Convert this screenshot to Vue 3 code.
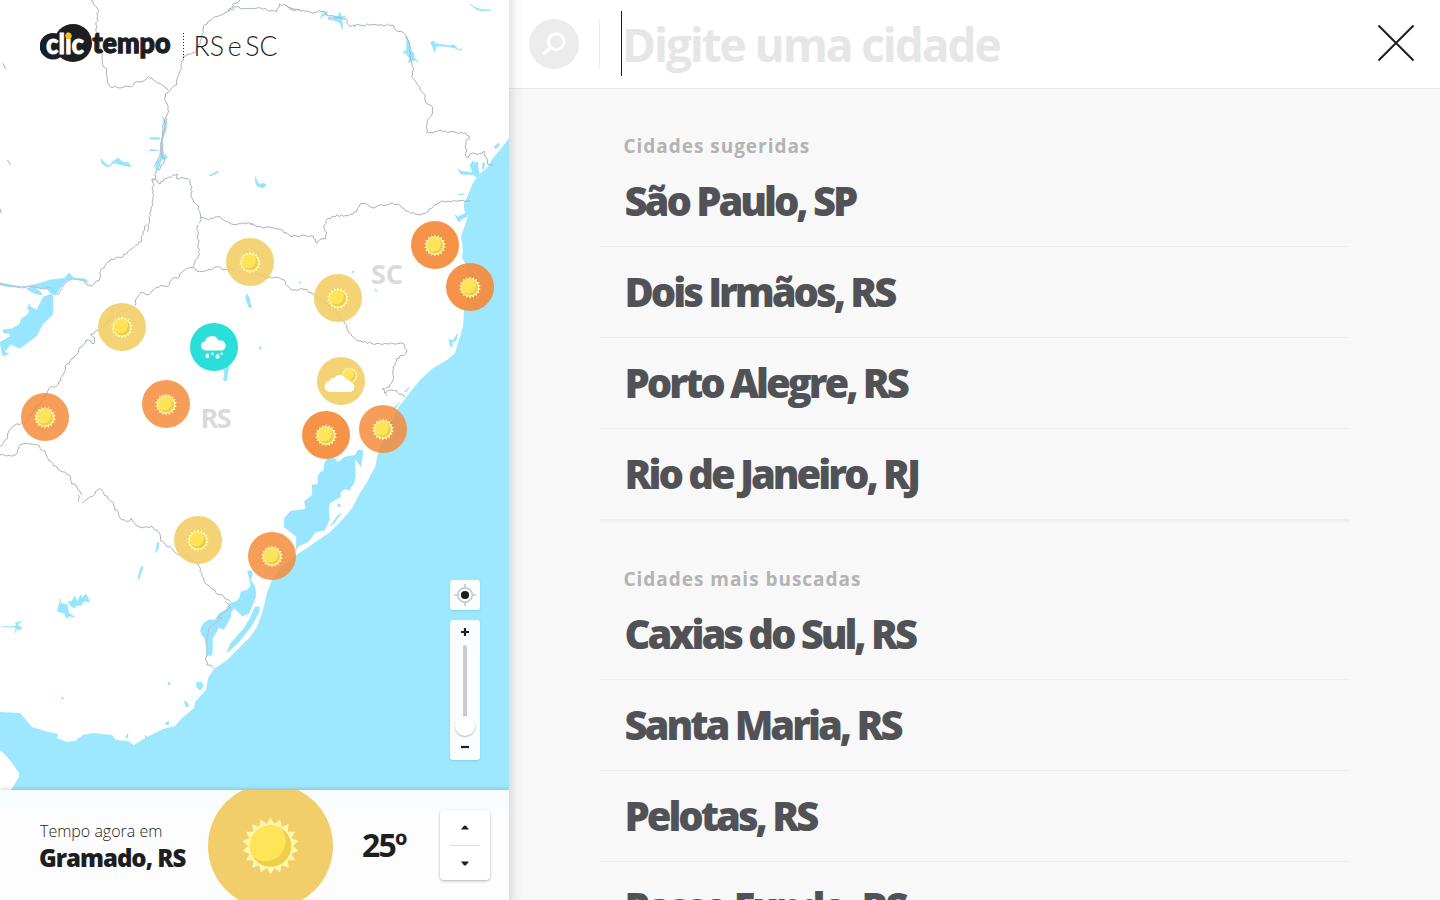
<script setup>
const SUN_SPIKES = 18

function spikes(outer, inner) {
  const points = []
  for (let i = 0; i < SUN_SPIKES * 2; i++) {
    const radius = i % 2 ? inner : outer
    const angle = (Math.PI * i) / SUN_SPIKES - Math.PI / 2
    points.push(`${(radius * Math.cos(angle)).toFixed(2)},${(radius * Math.sin(angle)).toFixed(2)}`)
  }
  return points.join(' ')
}

const sunRays = spikes(28.3, 22.3)

// Border lines: origin in map pixels; start and steps in thirds of a pixel.
const borderLines = [
  { x: 0, y: 0, start: [273, 0], steps: '7 12 12 13 2 23 -6 27 5 25 7 40 6 32 2 23 12 15 2 30 10 22 13 -4 12 6 18 -6 20 2 15 -15 25 -5 10 -10 15 10 20 10 25 22' },
  { x: 0, y: 0, start: [720, 0], steps: '-20 10 -15 25 -20 10 -30 12 -25 20 -6 40 -10 20 -8 20 -36 12 -12 50 -8 36 -20 17 -14 13 -2 14 12 36 -12 28 -5 22 -4 70 8 28 -25 35 -10 30 3 38 -10 60 -8 50' },
  { x: 0, y: 0, start: [453, 540], steps: '15 -2 12 14 12 -16 20 -4 8 -8 12 -2 -2 14 16 -4 10 4 14 6 6 20 -2 18 6 20 16 20 6 30 -6 20' },
  { x: 0, y: 0, start: [602, 652], steps: '24 8 20 -10 14 0 16 14 18 8 66 -2' },
  { x: 0, y: 0, start: [685, 34], steps: '25 -14 18 6 24 0 30 -2 20 6 28 4 8 -22 20 4 20 14 22 0' },
  { x: 0, y: 0, start: [8, 190], steps: '10 18' },
  { x: 0, y: 0, start: [22, 480], steps: '10 14' },
  { x: 0, y: 0, start: [0, 626], steps: '4 14' },
  { x: 260, y: 0, start: [80, 19], steps: '22 8 50 10 40 -3 16 14 26 4 22 4 14 24 16 -4 50 -2 60 1 12 14 26 14 10 16 6 20 2 40 8 24 -2 32 12 16 26 34 2 24 20 14 -4 24 -12 14 -2 36 20 2 24 -8 18 6 54 2 12 10 -10 24 -2 28 8 12 14 -14 20 2 14 -8 8 22 2 16 20 4' },
  { x: 250, y: 200, start: [0, 70], steps: '20 10 72 8 28 20 70 0 12 22 8 -12 18 -2 2 -20 -8 -14 6 -20 20 -14 40 -2 20 -2 20 -24 4 -10 20 4 20 10 20 -10 50 -2 20 14 20 14 28 5 16 -5 24 -20 20 -14 60 -4 30 0' },
  { x: 250, y: 200, start: [0, 210], steps: '52 24 30 -2 20 8 20 28 40 0 28 14 30 22 30 20 34 46 10 22 28 30 30 8 80 2 30 0 8 24 -30 20 -10 30 -2 34 -10 22 -22 4 16 20' },
  { x: 250, y: 200, start: [402, 578], steps: '16 -8 22 2 8 10 18 10' },
  { x: 0, y: 225, start: [595, 0], steps: '-4 14 4 40 4 32 -14 20 -6 22 20 12 34 -5 20 -10 12 8 40 2' },
  { x: 0, y: 225, start: [578, 128], steps: '-24 6 -22 26 -14 0 -14 24 -22 -2 -20 12 -18 16 -22 -8 -14 20 -4 20' },
  { x: 0, y: 225, start: [400, 245], steps: '-60 30 -48 41 -20 12 12 10 -2 18 -24 -10 -22 30 -14 22 -26 24 -6 26 -20 34 -24 10 -12 24 -60 80' },
  { x: 0, y: 225, start: [440, 0], steps: '-12 20 -4 30 -22 16 -14 10 -20 20 -36 6 -14 14 -16 20 -2 24 -24 24 -18 -8 -4 -8' },
  { x: 0, y: 225, start: [65, 594], steps: '-20 6 -18 18 -4 22 -23 24' },
  { x: 0, y: 225, start: [0, 690], steps: '20 3 28 -4 10 -24 10 -8 36 2' },
  { x: 0, y: 440, start: [105, 13], steps: '30 20 8 20 30 34 34 18 8 26 16 10 16 24' },
  { x: 0, y: 440, start: [236, 165], steps: '0 20' },
  { x: 0, y: 440, start: [246, 190], steps: '30 -20 22 -24 10 8 20 26 10 6 6 24 10 4 6 20 26 10 8 -10 6 12 20 16 40 0 20 20 0 18 55 45 20 0 32 24 10 10 8 30 14 24 18 14 14 16 20 6 20 16' },
  { x: 0, y: 440, start: [620, 640], steps: '0 34 14 2 8 10' },
]

// Splits every step into short pieces and nudges them sideways, so that
// the borders read as river courses rather than straight segments.
function meander({ x, y, start, steps }, seed) {
  let state = seed * 7919 + 13
  const noise = () => {
    state = (state * 16807) % 2147483647
    return state / 2147483647 - 0.5
  }
  const point = (px, py) => `${(x + px / 3).toFixed(1)} ${(y + py / 3).toFixed(1)}`
  const n = steps.split(' ').map(Number)
  let [cx, cy] = start
  let d = `M${point(cx, cy)}L`
  for (let i = 0; i < n.length; i += 2) {
    const dx = n[i]
    const dy = n[i + 1]
    const length = Math.hypot(dx, dy) || 1
    const parts = Math.max(1, Math.round(length / 7))
    for (let k = 1; k <= parts; k++) {
      const shift = k === parts ? 0 : noise() * 7
      d += `${point(cx + (dx * k) / parts - (dy / length) * shift, cy + (dy * k) / parts + (dx / length) * shift)} `
    }
    cx += dx
    cy += dy
  }
  return d
}

const borders = borderLines.map((line, i) => meander(line, i + 1))

const yellow = '#f2ce67'
const orange = '#f58a3a'

const markers = [
  { x: 435, y: 245, color: orange, opacity: 0.92, icon: 'sun' },
  { x: 470, y: 287, color: orange, opacity: 0.92, icon: 'sun' },
  { x: 250, y: 262, color: yellow, opacity: 0.9, icon: 'sun' },
  { x: 338, y: 298, color: yellow, opacity: 0.9, icon: 'sun' },
  { x: 122, y: 327, color: yellow, opacity: 0.9, icon: 'sun' },
  { x: 214, y: 347, color: '#2adfd9', opacity: 1, icon: 'rain' },
  { x: 341, y: 381, color: yellow, opacity: 0.9, icon: 'cloud' },
  { x: 45, y: 417, color: orange, opacity: 0.84, icon: 'sun' },
  { x: 166, y: 404, color: orange, opacity: 0.84, icon: 'sun' },
  { x: 326, y: 435, color: orange, opacity: 0.92, icon: 'sun' },
  { x: 383, y: 429, color: orange, opacity: 0.84, icon: 'sun' },
  { x: 198, y: 540, color: yellow, opacity: 0.9, icon: 'sun' },
  { x: 272, y: 556, color: orange, opacity: 0.84, icon: 'sun' },
]

const sections = [
  { title: 'Cidades sugeridas', cities: ['São Paulo, SP', 'Dois Irmãos, RS', 'Porto Alegre, RS', 'Rio de Janeiro, RJ'] },
  { title: 'Cidades mais buscadas', cities: ['Caxias do Sul, RS', 'Santa Maria, RS', 'Pelotas, RS', 'Passo Fundo, RS'] },
]
</script>

<template>
  <div class="app">
    <aside class="side">
      <div class="map">
        <svg class="map-art" width="509" height="790" viewBox="0 0 509 790">
          <defs>
            <clipPath id="disc"><circle r="20.8" /></clipPath>
            <g id="sun">
              <polygon :points="sunRays" fill="#fff8ac" />
              <circle r="20.8" fill="#edcf4c" />
              <circle cx="-5" cy="-5" r="20" fill="#ffe45a" clip-path="url(#disc)" />
            </g>
          </defs>

          <path class="sea" d="M509 138L500 150 493 158 487 168 478 175 473 183 467 197 464 203 464 210 466 213 468 215 465 225 461 237 463 250 462 258 465 263 468 290 464 310 463 327 459 340 455 353 447 360 433 368 420 380 412 390 405 399 398 408 388 427 378 453 375 467 367 482 360 493 352 508 342 520 330 532 320 539 307 548 296 555 281 567 272 580 267 593 263 610 257 627 250 637 237 650 227 660 214 669 208 678 206 690 195 702 194 708 182 718 175 726 163 729 147 737 134 745 128 741 116 740 112 735 93 733 83 735 75 741 67 742 57 738 58 734 45 731 32 727 20 713 0 712V750L10 760 19 773 19 777 11 790H509Z" />

          <!-- inland water -->
          <g class="water">
            <g transform="scale(.33333)">
              <path d="M488 350l8 12 5 5-3 25-8 20-4 25 6 25 10 8-5 8-8-2-8 12-6 22-8-4 2-18 10-12 4-20-2-22 6-22 6-30z M450 413l28 0v5l-28 0z M450 448l26 3-26 2z M303 476l12 14 12 8 14-16 14-8 12 12 18 2 8 12-20-3-20-6-12-2-14 12-10-2-12-10z M627 526l20-8-2-2 12-2-10 8-18 6z M766 530l6 16 8 8 10-4 8 3-10 10-16-4-5-12z" />
            </g>
            <g transform="translate(260 0) scale(.33333)">
              <path d="M628 11l14 10 24 8 28 1-24 3-20-4z M182 55l4-14 16-6-2 8-12 6z M205 52l30-4 5-12 4 14 14-2-12 8 2 34-8-22-20-8-16-2z M280 80l6-5-2 7z M440 108l8 22 4 20 10 10 0 14 14 12-14-6-16 8 2-14-10-14-10-2 12-8z M512 127l10-4 3 8 24 3 16 4 16-4 14 14 12-1-8 4-16-8-14-2-30-4-12 4-2 16z M594 506l10 8 34 4-4-14-4-6 8-16 8 8 8-4 0 18 4 16-10 12-8-8-38-2z M668 490l6-2-2 16-4 6z M702 440l12-10 5 2-6 10-6 4z M594 583l20-2-10 4z M4 552l14 2-8 10z M585 644l10 10 20-10 8 4-20 10-8 6z" />
            </g>
            <g transform="translate(0 225) scale(.33333)">
              <path d="M0 173l30 6 40 8 50-12 30-10 45-5 12-17 14 16 35 3 10 10-30-7-18-4-20 6-16 20-16 24-16-8-8-10-30-4-24-6-60 3-38-8z M80 192l20-8 22 18 4 8-20-4z M155 208l4 10-1 50-30 30-18 34-50 38-28-12-18 22 12 8-18 4-8-40 32-18-4-10-18 0 0-10 24-2 26-14 4-16 20-14 8-22 18 10 20-40z M88 236l4 14-10 4z M740 206l10 16 0 20 5 4-8 0-10-26z M672 434l6-8 4-8 4 12-4 20-2 18-10-3 4-16z" />
            </g>
            <g transform="translate(250 200) scale(.33333)">
              <path d="M597 418l12 4 14-22-4 20-14 10 2 12-6-4z M462 576l16-14-8 12z M422 636l26-30-12 20-8 4z M0 310l5 10-5 4z M28 440l5 0-2 10z M305 216l8-3-4 6z M148 248l6-4-4 8z M374 266l6 4-1 5z M616 44l6 8 20-10 6-4 6 4-20 10-6 14z" />
            </g>
            <g transform="translate(160 430) scale(.33333)">
              <path d="M505 84l25 4-4 8 14-2 12-12 34-6 8-16 14 2 0 10-6 38-12-20-6 4 2 44-4 20-14 22-14-4-14 12 2 12-34 20-2 18 2 30-14 32-28 6-20 28-34 16-4 10 2-40-38-30 2-26 18-20 46-6-4-24 24-20-2-28 18-4 0-24 12-16 4 10 4-34z M534 224l4-4 4 8-8 2z M545 250l-22 28-12 10 20-28z M263 424l12-2 2 12-6 16 14 20 2 30-20 50-20 8-24-24-10 12 0 12-12 24-10 16-16-6-4 10-14 24 0 40-4 12-12-4-4-36-4-16-6-4-6-16 8-20 16-12 20 0 14-20 20-12 8-18 20-4 12-12 4-18 20-6 10-14z M285 532l12-2 0 16-24 44-40 50-32 28 10-26 40-46 20-32z M108 758l14-2 8 10-8 14-10-6z M24 756l8 4-6 6z" />
            </g>
            <g transform="translate(0 440) scale(.33333)">
              <path d="M472 308l5 0-2 16-8 14z M426 378l3 4-12 36-3-2 6-26z M204 486l12-2 8-16 8 18 10-22 4 10 12-12 8 16 2 8-16-4-8 14-14 0-6 8-12-6z M182 476l-2 14 22 4 4 24 18 14-18-4-6 8-6-16-22-6z M6 560l32 0 12-4-4-8 20-4-14 10 14 10-8 6-8-4-4 12 2-16z M183 774l8-2-3 6z" />
            </g>
            <g transform="translate(0 640) scale(.33333)">
              <path d="M553 184l8 2 5 14-8 0z M494 250l13-6-2 12z M384 280l-2 14-6-3z M435 286l8 6-5 4z" />
            </g>
          </g>

          <!-- state and country borders -->
          <g class="borders">
            <path v-for="(d, i) in borders" :key="i" :d="d" />
          </g>
          <g class="water-borders">
            <path d="M167 118L164 132 161 143 160 155 154 167" />
            <path d="M0 284L22 288 32 286 42 289 50 287 58 295 65 283 72 279 83 280 88 285" />
            <path d="M225 601L231 607 218 617 222 618 209 628 207 640V652" />
          </g>

          <g class="labels">
            <text x="371" y="283.500" textLength="32">SC</text>
            <text x="200.500" y="428.200" textLength="31">RS</text>
          </g>

          <g v-for="m in markers" :key="`${m.x}-${m.y}`" :transform="`translate(${m.x} ${m.y})`">
            <circle r="24" :fill="m.color" :fill-opacity="m.opacity" />
            <use v-if="m.icon === 'sun'" href="#sun" transform="translate(0 .5) scale(.39)" />
            <g v-else-if="m.icon === 'rain'" fill="#fff">
              <path d="M-8.500 3.500a4.700 4.700 0 0 1-.6-9.300A7.200 7.200 0 0 1 4.600-6.300 4.900 4.900 0 1 1 8.300 3.500Z" />
              <circle cx="-6.600" cy="9" r="1.900" />
              <circle cx="-1.600" cy="6.700" r="1.300" />
              <circle cx="3.500" cy="9.800" r="2.100" />
              <circle cx="7.700" cy="6.700" r="1.300" />
              <path d="M-8.300 8.300-6.300 5.800-5 8.300ZM1.700 9 4 6.200 5.400 9Z" />
            </g>
            <g v-else>
              <use href="#sun" transform="translate(8.500 -5.500) scale(.3)" />
              <path d="M-10.500 11a5.600 5.600 0 0 1-.5-11.200 3.400 3.400 0 0 1 4-2.800A7 7 0 0 1 5.200-1.500 4 4 0 0 1 9.500 1.200 5 5 0 0 1 9 11Z" fill="#fff" />
            </g>
          </g>
        </svg>

        <svg class="logo" width="240" height="44" viewBox="40 20 240 44">
          <circle cx="53" cy="46.200" r="13.300" fill="#1d1e22" />
          <circle cx="73" cy="43" r="19" fill="#1d1e22" />
          <text class="brand clic" x="46" y="54" textLength="38" lengthAdjust="spacingAndGlyphs">clic</text>
          <circle cx="68.500" cy="36" r="3.100" fill="#fbc40f" />
          <text class="brand tempo" x="92.500" y="53" textLength="78" lengthAdjust="spacingAndGlyphs">tempo</text>
          <path d="M183.500 33V58" stroke="#1d1e22" stroke-dasharray="1 2" />
          <text class="region" x="193.500" y="56.300" textLength="84" lengthAdjust="spacingAndGlyphs">RS e SC</text>
        </svg>

        <div class="controls">
          <button class="locate" aria-label="Localizar">
            <svg width="22" height="22" viewBox="-11 -11 22 22">
              <circle r="7.200" fill="none" stroke="#c9c9cb" stroke-width="1.700" />
              <path d="M0-11V-7M0 7V11M-11 0H-7M7 0H11" stroke="#c9c9cb" stroke-width="1.600" />
              <circle r="4.100" fill="#1d1e22" />
            </svg>
          </button>
          <div class="zoom">
            <svg width="30" height="140" viewBox="0 0 30 140">
              <path d="M11 12H19M15 8V16" stroke="#1d1e22" stroke-width="2.200" />
              <rect x="13" y="25" width="4" height="76" rx="2" fill="#cbcbcd" />
              <path d="M11 127H19" stroke="#1d1e22" stroke-width="2.200" />
            </svg>
            <span class="knob"></span>
          </div>
        </div>
      </div>

      <footer class="now">
        <div class="place">
          <span class="caption">Tempo agora em</span>
          <strong class="town">Gramado, RS</strong>
        </div>
        <svg class="now-icon" width="127" height="110" viewBox="-63.500 -56 127 110">
          <circle r="62.500" fill="#f1ce69" />
          <use href="#sun" />
        </svg>
        <span class="temp">25º</span>
        <div class="stepper">
          <svg width="10" height="5" viewBox="0 0 10 5"><path d="M1 4.500 4 .8Q5 0 6 .8L9 4.500Z" fill="#1d1e22" /></svg>
          <i class="split"></i>
          <svg width="10" height="5" viewBox="0 0 10 5"><path d="M1 .5 4 4.200Q5 5 6 4.200L9 .5Z" fill="#1d1e22" /></svg>
        </div>
      </footer>
    </aside>

    <main class="panel">
      <header class="search">
        <svg class="glass" width="50" height="50" viewBox="-25 -25 50 50">
          <circle r="25" fill="#ececec" />
          <circle cx="2.300" cy="-2.300" r="7.900" fill="none" stroke="#fff" stroke-width="2.900" />
          <path d="M-3.500 3.500-10 9.500" stroke="#fff" stroke-width="3.200" stroke-linecap="round" />
        </svg>
        <i class="rule"></i>
        <i class="caret"></i>
        <span class="placeholder">Digite uma cidade</span>
        <svg class="close" width="40" height="42" viewBox="-20 -20 40 42">
          <path d="M-17.500-17.500 17.500 17.500M17.500-17.500-17.500 17.500" stroke="#1a1b1e" stroke-width="1.900" />
        </svg>
      </header>
      <section v-for="s in sections" :key="s.title" class="group">
        <h2>{{ s.title }}</h2>
        <ul>
          <li v-for="c in s.cities" :key="c">{{ c }}</li>
        </ul>
      </section>
    </main>
  </div>
</template>

<style>
body {
  overflow: hidden;
}
</style>

<style scoped>
.app {
  display: flex;
  width: 1440px;
  height: 900px;
  overflow: hidden;
  font-family: "Open Sans", "Noto Sans", sans-serif;
  color: #1d1e22;
}

.side {
  display: flex;
  flex-direction: column;
  flex: 0 0 509px;
  background: #fff;
}

.map {
  position: relative;
  height: 790px;
}

.map-art {
  display: block;
}

.sea {
  fill: #9de7ff;
}

.water {
  fill: #97e5ff;
  stroke: #84dcfb;
  stroke-width: 1.5;
}

.borders {
  fill: none;
  stroke: #a7b1bb;
  stroke-width: 1;
  stroke-linejoin: round;
}

.water-borders {
  fill: none;
  stroke: #c9b9c0;
  stroke-width: 1;
}

.labels {
  font-size: 27px;
  font-weight: 700;
  fill: #dadada;
}

.logo {
  position: absolute;
  left: 40px;
  top: 20px;
}

.brand {
  font-family: Lato, sans-serif;
  font-weight: 900;
  font-size: 29px;
}

.clic {
  fill: #fff;
  stroke: #fff;
  stroke-width: 0.8;
}

.tempo {
  fill: #1d1e22;
  stroke: #1d1e22;
  stroke-width: 1.3;
}

.region {
  font-family: Lato, sans-serif;
  font-weight: 300;
  font-size: 26.5px;
  word-spacing: -3.5px;
  fill: #1d1e22;
}

.controls {
  position: absolute;
  left: 450px;
  top: 580px;
  display: flex;
  flex-direction: column;
  gap: 10px;
}

.locate,
.zoom {
  position: relative;
  display: flex;
  align-items: center;
  justify-content: center;
  box-sizing: border-box;
  width: 30px;
  height: 30px;
  padding: 0;
  border: 0;
  border-radius: 3px;
  background: #fbfeff;
  box-shadow: 0 1px 2px rgba(40, 110, 140, 0.2);
}

.zoom {
  height: 140px;
}

.knob {
  position: absolute;
  left: 5px;
  top: 96px;
  width: 20px;
  height: 20px;
  border-radius: 50%;
  background: #fff;
  box-shadow: 0 1px 2px rgba(0, 0, 0, 0.3);
}

.now {
  position: relative;
  display: flex;
  box-sizing: border-box;
  height: 110px;
  padding-left: 40px;
  background: linear-gradient(#fafdff 20px, #fdfdfd 20px);
  box-shadow: 0 -1px 4px rgba(0, 0, 0, 0.16);
}

.place {
  display: flex;
  flex-direction: column;
  width: 167px;
  padding-top: 30px;
  white-space: nowrap;
}

.caption {
  font-size: 16px;
  font-weight: 300;
  line-height: 22px;
}

.town {
  margin-left: -1px;
  font-size: 24px;
  font-weight: 800;
  line-height: 32px;
  letter-spacing: -1px;
}

.now-icon {
  flex: none;
}

.temp {
  width: 78px;
  margin-left: 28px;
  font-size: 32px;
  font-weight: 700;
  line-height: 110px;
  letter-spacing: -1.8px;
}

.stepper {
  display: flex;
  flex-direction: column;
  align-items: center;
  justify-content: space-between;
  box-sizing: border-box;
  width: 50px;
  height: 70px;
  margin-top: 20px;
  padding: 15px 0 14px;
  border-radius: 4px;
  background: #fff;
  box-shadow: 0 1px 3px rgba(0, 0, 0, 0.3);
}

.split {
  width: 30px;
  height: 1px;
  background: #dcdfe1;
}

.panel {
  position: relative;
  flex: 1;
  overflow: hidden;
  background: #f8f8f8;
}

.panel::before {
  content: "";
  position: absolute;
  inset: 0 auto 0 0;
  z-index: 1;
  width: 14px;
  background: linear-gradient(90deg, rgba(0, 0, 0, 0.1), rgba(0, 0, 0, 0.03) 50%, transparent);
}

.search {
  display: flex;
  align-items: center;
  box-sizing: border-box;
  height: 89px;
  padding: 0 24px 0 20px;
  border-bottom: 1px solid #e8e8e8;
  background: #fff;
}

.rule {
  width: 1px;
  height: 50px;
  margin: 0 21px 0 20px;
  background: #ececec;
}

.caret {
  width: 1px;
  height: 65px;
  margin-bottom: 1px;
  background: #1a1b1e;
}

.placeholder {
  flex: 1;
  font-size: 46px;
  font-weight: 700;
  line-height: 88px;
  letter-spacing: -2.1px;
  color: #e6e6e6;
}

.group {
  width: 750px;
  margin-left: 91px;
}

.group h2 {
  box-sizing: border-box;
  height: 67px;
  margin: 0;
  padding: 43px 0 0 23.5px;
  font-size: 19px;
  font-weight: 700;
  line-height: 28px;
  letter-spacing: 0.97px;
  color: #b3b3b3;
}

.group ul {
  margin: 0;
  padding: 0;
  border-bottom: 2px solid #f0f0f0;
  list-style: none;
}

.group li {
  box-sizing: border-box;
  height: 91px;
  padding-left: 24.5px;
  border-bottom: 1px solid #eee;
  font-size: 40px;
  font-weight: 800;
  line-height: 90px;
  letter-spacing: -3.05px;
  color: #515256;
}
</style>
